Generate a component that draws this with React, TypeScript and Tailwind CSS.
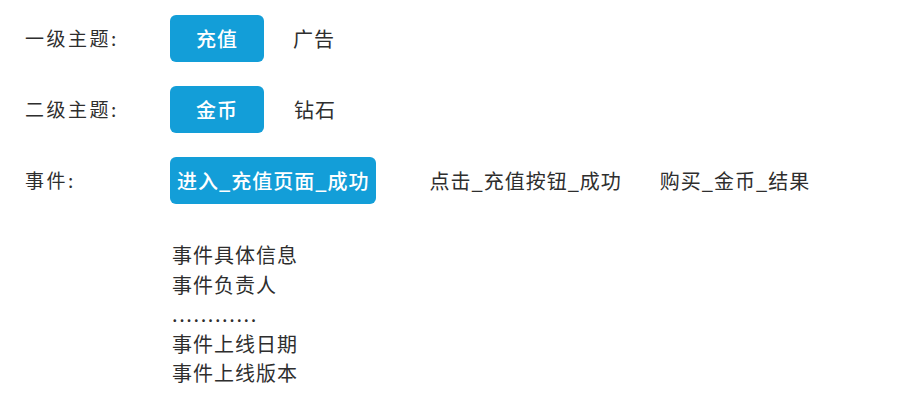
import React from "react";

const font = {
  fontFamily: '"Noto Sans CJK SC", "Noto Sans", sans-serif',
};

function Chip({ children, active }: { children: React.ReactNode; active?: boolean }) {
  if (active) {
    return (
      <div className="flex h-[47px] min-w-[94px] items-center justify-center rounded-[6px] bg-[#139ed8] px-[7px] text-[20px] font-medium tracking-[1px] text-white">
        {children}
      </div>
    );
  }
  return (
    <div className="flex h-[47px] items-center text-[20px] tracking-[1px] text-[#2e2e2e]">{children}</div>
  );
}

function Row({ label, children }: { label: string; children: React.ReactNode }) {
  return (
    <div className="flex items-center">
      <div className="w-[145px] text-[19px] tracking-[2.5px] text-[#2e2e2e]">{label}</div>
      <div className="flex items-center">{children}</div>
    </div>
  );
}

export default function App() {
  return (
    <div className="h-[406px] w-[900px] bg-white pl-[25px] pt-[15px]" style={font}>
      <div className="flex flex-col gap-[24px]">
        <Row label="一级主题:">
          <Chip active>充值</Chip>
          <div className="ml-[29px]">
            <Chip>广告</Chip>
          </div>
        </Row>
        <Row label="二级主题:">
          <Chip active>金币</Chip>
          <div className="ml-[30px]">
            <Chip>钻石</Chip>
          </div>
        </Row>
        <Row label="事件:">
          <Chip active>进入_充值页面_成功</Chip>
          <div className="ml-[53px]">
            <Chip>点击_充值按钮_成功</Chip>
          </div>
          <div className="ml-[38px]">
            <Chip>购买_金币_结果</Chip>
          </div>
        </Row>
      </div>
      <div className="ml-[147px] mt-[36px] flex flex-col text-[20px] leading-[29.5px] tracking-[1px] text-[#2e2e2e]">
        <div>事件具体信息</div>
        <div>事件负责人</div>
        <div className="tracking-[1.6px]">............</div>
        <div>事件上线日期</div>
        <div>事件上线版本</div>
      </div>
    </div>
  );
}
